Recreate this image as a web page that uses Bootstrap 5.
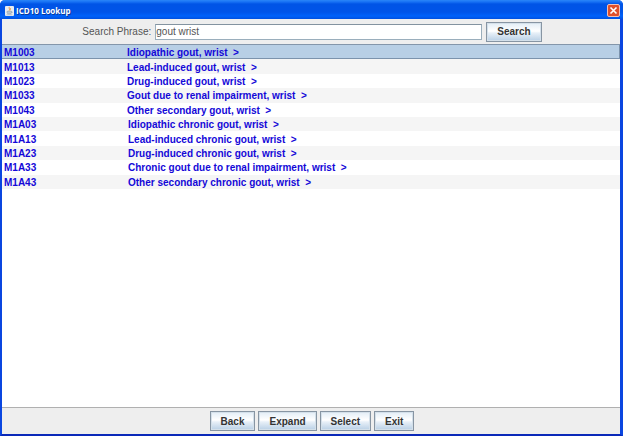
<!DOCTYPE html>
<html lang="en">
<head>
<meta charset="utf-8">
<meta name="viewport" content="width=device-width, initial-scale=1">
<title>ICD10 Lookup</title>
<link href="https://cdn.jsdelivr.net/npm/bootstrap@5.3.0/dist/css/bootstrap.min.css" rel="stylesheet">
<style>
body { font-family: "Liberation Sans", Arial, sans-serif; font-size: 10px; line-height: 14px; background: #fff; }
.app-window { background: #eee; border: solid #0a46e0; border-width: 0 3px 2px 2px; border-bottom-color: #0a28b8; border-radius: 5px 5px 0 0; }
.title-bar { height: 19px; gap: 2px; margin: 0 -3px 0 -2px; padding: 2px 3px 0 5px; color: #fff; background: linear-gradient(#2a86f8 0, #1670f4 2px, #0054e6 4px, #0054e8 12px, #0062fa 16px, #0050e0 19px); border-radius: 5px 5px 0 0; }
.title-text { font: bold 8px/12px "Open Sans", sans-serif; text-shadow: 1px 1px #0a3a9c; }
.close-btn { width: 13px; height: 13px; line-height: 0; }
.search-bar { height: 25px; gap: 4px; padding-left: 2px; }
.phrase-label { color: #555; padding-top: 1px; }
.phrase-input { width: 327px; height: 16px; color: #555; background: #fff; border: 1px solid #9aaebc; border-top-color: #8393a0; line-height: 14px; }
.swing-btn { height: 20px; padding: 1px 10px 0; color: #333; font-size: 10px; font-weight: bold; line-height: 16px; border: 1px solid #8795a3; border-radius: 0; background: linear-gradient(#e2edf6, #fff 45%, #e8f0f8 55%, #b8cfe5); box-shadow: inset 0 0 0 1px #d4e0ea; }
.result-list { background: #fff; border-top: 1px solid #8496aa; border-bottom: 1px solid #b0b0b0; }
.codes { height: 144px; color: #1408d8; font-weight: bold; line-height: 12px; }
.codes td { padding: 2px 2px 0; white-space: pre; }
.codes td:first-child { width: 123px; }
.codes tr:nth-child(even) { background: #f5f5f5; }
.codes tr.selected { background: #b8cfe5; box-shadow: inset 0 -1px #7c93ac, inset -1px 0 #7c93ac; }
.codes tr.chronic td:last-child { padding-left: 3px; }
.action-bar { height: 26px; gap: 3px; padding-left: 2px; }
</style>
</head>
<body>
<main class="app-window d-flex flex-column vh-100">
  <header class="title-bar d-flex align-items-center flex-shrink-0">
    <svg width="9" height="10" viewBox="0 0 9 10" aria-hidden="true">
      <rect width="9" height="10" rx="1" fill="#e8ecf0"/>
      <path d="M4.6.8C3 2.3 5.6 3 4 4.6M5.8 2C4.8 2.8 5.8 3.4 5 4.5" fill="none" stroke="#e89038" stroke-width=".9"/>
      <path d="M2 5.3h4.6v1.2a1.6 1.6 0 0 1-1.6 1.4H3.6A1.6 1.6 0 0 1 2 6.500zM6.600 5.700q1.500 0 0 1.300M1.500 8.800h5.800" fill="#b9c5d1" stroke="#8ea0b2" stroke-width=".6"/>
    </svg>
    <h1 class="title-text m-0 me-auto">ICD10 Lookup</h1>
    <button class="close-btn border-0 bg-transparent p-0" type="button" aria-label="Close">
      <svg width="13" height="13" viewBox="0 0 13 13" aria-hidden="true">
        <rect x=".5" y=".5" width="12" height="12" rx="1.500" fill="#e0502c" stroke="#f3c0b4"/>
        <path d="M3.500 3.500l6 6m0-6l-6 6" stroke="#fff" stroke-width="1.600"/>
      </svg>
    </button>
  </header>
  <form class="search-bar d-flex align-items-center justify-content-center flex-shrink-0">
    <label class="phrase-label" for="phrase">Search Phrase:</label>
    <input class="phrase-input rounded-0 p-0" id="phrase" type="text" value="gout wrist">
    <button class="swing-btn" type="button">Search</button>
  </form>
  <section class="result-list flex-grow-1 overflow-hidden">
    <table class="codes w-100">
      <tbody>
        <tr class="selected"><td>M1003</td><td>Idiopathic gout, wrist  &gt;</td></tr>
        <tr><td>M1013</td><td>Lead-induced gout, wrist  &gt;</td></tr>
        <tr><td>M1023</td><td>Drug-induced gout, wrist  &gt;</td></tr>
        <tr><td>M1033</td><td>Gout due to renal impairment, wrist  &gt;</td></tr>
        <tr><td>M1043</td><td>Other secondary gout, wrist  &gt;</td></tr>
        <tr class="chronic"><td>M1A03</td><td>Idiopathic chronic gout, wrist  &gt;</td></tr>
        <tr class="chronic"><td>M1A13</td><td>Lead-induced chronic gout, wrist  &gt;</td></tr>
        <tr class="chronic"><td>M1A23</td><td>Drug-induced chronic gout, wrist  &gt;</td></tr>
        <tr class="chronic"><td>M1A33</td><td>Chronic gout due to renal impairment, wrist  &gt;</td></tr>
        <tr class="chronic"><td>M1A43</td><td>Other secondary chronic gout, wrist  &gt;</td></tr>
      </tbody>
    </table>
  </section>
  <footer class="action-bar d-flex align-items-center justify-content-center flex-shrink-0">
    <button class="swing-btn" type="button">Back</button>
    <button class="swing-btn" type="button">Expand</button>
    <button class="swing-btn" type="button">Select</button>
    <button class="swing-btn" type="button">Exit</button>
  </footer>
</main>
<script src="https://cdn.jsdelivr.net/npm/bootstrap@5.3.0/dist/js/bootstrap.bundle.min.js"></script>
</body>
</html>
